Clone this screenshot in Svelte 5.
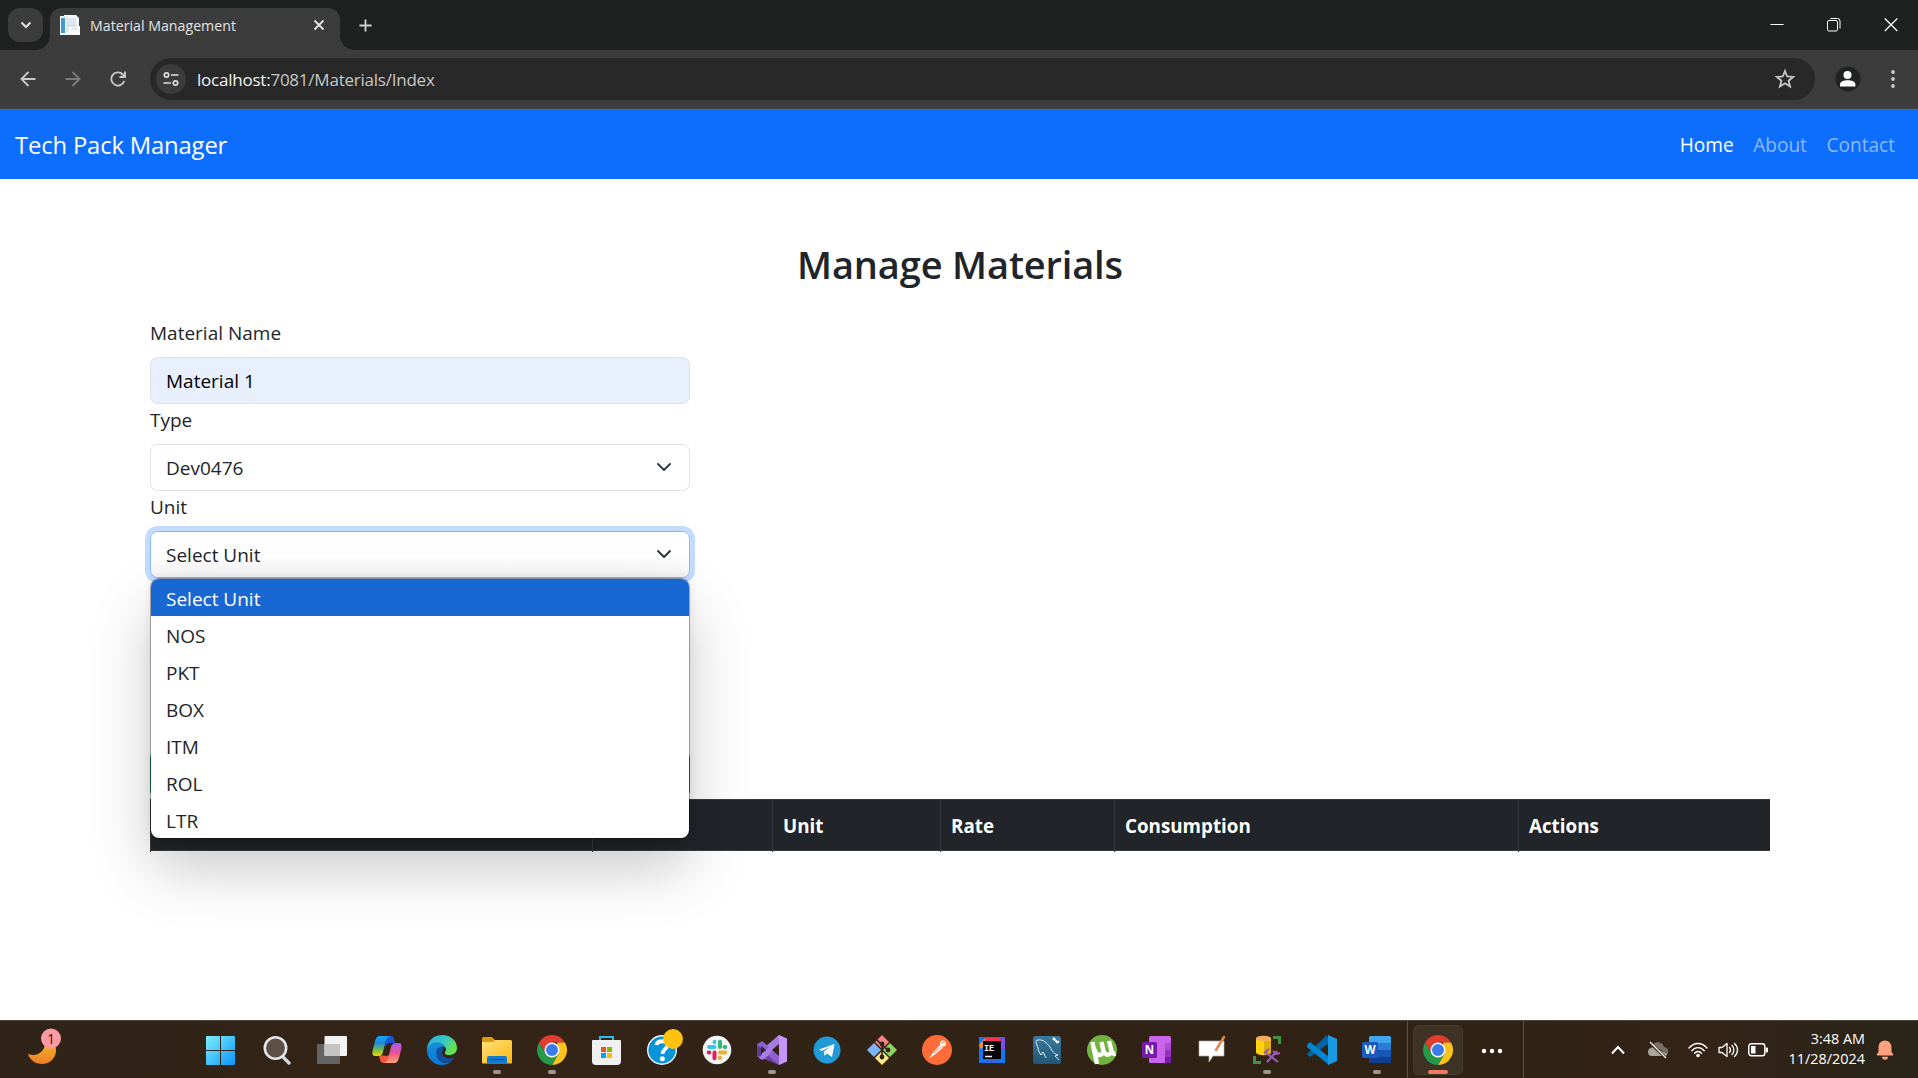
<script>
  const links = ['Home', 'About', 'Contact'];
  const units = ['Select Unit', 'NOS', 'PKT', 'BOX', 'ITM', 'ROL', 'LTR'];
  const columns = ['', '', 'Unit', 'Rate', 'Consumption', 'Actions'];
  const apps = [
    { icon: start }, { icon: search }, { icon: taskview }, { icon: copilot }, { icon: edge },
    { icon: explorer, open: true }, { icon: chrome, open: true }, { icon: store }, { icon: help },
    { icon: slack }, { icon: visualstudio, open: true }, { icon: telegram }, { icon: git },
    { icon: postman }, { icon: intellij }, { icon: mysql }, { icon: utorrent }, { icon: onenote },
    { icon: whiteboard }, { icon: ssms, open: true }, { icon: vscode }, { icon: word, open: true }
  ];
</script>

{#snippet start()}
  <svg viewBox="0 0 30 30">
    <defs><linearGradient id="win" x1="0" y1="0" x2="1" y2="1" gradientUnits="objectBoundingBox"><stop offset="0" stop-color="#7df1ff" /><stop offset="1" stop-color="#0a95fb" /></linearGradient></defs>
    <path fill="url(#win)" d="M1 2a1 1 0 0 1 1-1h13v14H1zM16 1h13a1 1 0 0 1 1 1v13H16zM1 16h14v14H2a1 1 0 0 1-1-1zM16 16h14v13a1 1 0 0 1-1 1H16z" />
  </svg>
{/snippet}
{#snippet search()}
  <svg viewBox="0 0 30 30"><path d="m21 22 6 6" stroke="#d5d8dc" stroke-width="3.4" stroke-linecap="round" /><circle cx="13.5" cy="13" r="10.7" fill="#5c4f43" stroke="#e4e6e9" stroke-width="2.6" /></svg>
{/snippet}
{#snippet taskview()}
  <svg viewBox="0 0 30 30"><rect y="9" width="23" height="20" rx="1" fill="#646464" /><rect x="7.5" y="1" width="22.5" height="20" rx="1" fill="#f2f2f2" /><path fill="#c4c4c4" d="M7.500 9H23v12H8.500a1 1 0 0 1-1-1z" /></svg>
{/snippet}
{#snippet copilot()}
  <svg viewBox="0 0 30 30">
    <defs>
      <linearGradient id="cp1" x1="0" y1="0" x2="0" y2="1"><stop offset="0" stop-color="#15a5f5" /><stop offset=".35" stop-color="#1f86dd" /><stop offset=".65" stop-color="#62b959" /><stop offset="1" stop-color="#f8d400" /></linearGradient>
      <linearGradient id="cp2" x1="0" y1="0" x2="0" y2="1"><stop offset="0" stop-color="#a35cf2" /><stop offset=".5" stop-color="#ee4f93" /><stop offset="1" stop-color="#ffa767" /></linearGradient>
    </defs>
    <path fill="#1c56d7" d="M14 1h5c3 0 3 3 4 7h-5c-3 0-4 2-5 6z" />
    <path fill="#f2573c" d="M7 20c1 5 1 8 5 8h4l3-9-4 2z" />
    <path fill="url(#cp1)" d="M8 1h10c-3 1-4 4-5 8l-2 8c-1 3-2 4-5 4H3c-3 0-3-3-2-7l2-8c1-3 2-5 5-5z" />
    <path fill="url(#cp2)" d="M22 28H12c3-1 4-4 5-8l2-8c1-3 2-4 5-4h3c3 0 3 3 2 7l-2 8c-1 3-2 5-5 5z" />
  </svg>
{/snippet}
{#snippet edge()}
  <svg viewBox="0 0 30 30">
    <defs>
      <linearGradient id="ed1" x1="0" y1="0" x2="1" y2=".5"><stop offset="0" stop-color="#2aa8e4" /><stop offset=".55" stop-color="#35c7c8" /><stop offset="1" stop-color="#69e34b" /></linearGradient>
      <linearGradient id="ed2" x1="0" y1="0" x2="0" y2="1"><stop offset="0" stop-color="#168fd6" /><stop offset="1" stop-color="#0878d8" /></linearGradient>
    </defs>
    <path fill="url(#ed2)" d="M0 15C0 9 6 6 11 7c6 0 9 4 9 8-2-5-8-4-9 1-1 7 6 13 13 11-3 2-6 3-9 3C6 30 0 23 0 15z" />
    <path fill="#104f9c" d="M10 14c-2 4 0 12 6 14 4 1 9-1 12-6-5 3-13 1-13-5 0-2 1-3 2-4-3-1-6-1-7 1z" />
    <path fill="url(#ed1)" d="M0 14C1 5 7 0 15 0c9 0 15 6 15 13 0 5-4 7-8 7-3 0-5-1-4-3 2-2 1-5-1-7C12 5 3 7 0 14z" />
  </svg>
{/snippet}
{#snippet explorer()}
  <svg viewBox="0 0 30 30">
    <defs><linearGradient id="fld" x1="0" y1="0" x2="1" y2="1"><stop offset="0" stop-color="#ffe07a" /><stop offset="1" stop-color="#fcb813" /></linearGradient></defs>
    <path fill="#dd9c0c" d="M0 3.500a1.500 1.500 0 0 1 1.500-1.500H10l3 3v5H0z" /><path fill="url(#fld)" d="M0 7h11l2-2h15.500A1.500 1.500 0 0 1 30 6.500v21a1 1 0 0 1-1 1H1a1 1 0 0 1-1-1z" />
    <path fill="#1479cf" d="M5 28.500V23a2 2 0 0 1 2-2h16a2 2 0 0 1 2 2v5.500z" /><path stroke="#0b4d92" d="M8 24.500h14" />
  </svg>
{/snippet}
{#snippet chrome()}
  <svg viewBox="0 0 30 30">
    <path fill="#e33b2e" d="M2.010 7.500A15 15 0 0 1 28 7.500H15L8.500 18.750z" />
    <path fill="#fcc21b" d="M28 7.500A15 15 0 0 1 15 30l6.500-11.250L20 7.500z" />
    <path fill="#259b4a" d="M15 30A15 15 0 0 1 2.010 7.500L8.500 18.750 21.500 18.750z" />
    <circle cx="15" cy="15" r="7.500" fill="#fff" /><circle cx="15" cy="15" r="6" fill="#3a7cec" />
  </svg>
{/snippet}
{#snippet store()}
  <svg viewBox="0 0 30 30"><path d="M8 7V2h13v5" fill="none" stroke="#2cbbed" stroke-width="2" /><path fill="#f0f0f0" d="M0 6a1 1 0 0 1 1-1h27a1 1 0 0 1 1 1v20a4 4 0 0 1-4 4H4a4 4 0 0 1-4-4z" /><path fill="#f25022" d="M9 12h5v5H9z" /><path fill="#7fba00" d="M15 12h5v5h-5z" /><path fill="#00a4ef" d="M9 18h5v5H9z" /><path fill="#ffb900" d="M15 18h5v5h-5z" /></svg>
{/snippet}
{#snippet help()}
  <svg viewBox="0 0 30 30"><circle cx="15" cy="15" r="14.300" fill="#0795d8" stroke="#eef8fc" stroke-width="1.400" /><path d="M9.500 10c1-5 11-5 11 0 0 4-5 4-5 9" fill="none" stroke="#fff" stroke-width="3.800" /><circle cx="15.300" cy="23.800" r="2.500" fill="#fff" /><circle cx="26" cy="4" r="10" fill="#ffc20e" /></svg>
{/snippet}
{#snippet slack()}
  <svg viewBox="0 0 30 30">
    <circle cx="15" cy="15" r="14.300" fill="#f6f5f6" />
    <g fill="none" stroke-width="4" stroke-linecap="round">
      <path stroke="#36c5f0" d="M7 12h5.500M12.500 6.700v.6" /><path stroke="#2eb67d" d="M18 6.700V12M23.200 12h-.6" />
      <path stroke="#ecb22e" d="M18 17.500h5.200M18 23.200v-.6" /><path stroke="#e01e5a" d="M12.500 17.500v5.700M6.700 17.500h.6" />
    </g>
  </svg>
{/snippet}
{#snippet visualstudio()}
  <svg viewBox="0 0 30 30"><path fill="#6a43a0" d="M0 9 3 7.500 22 25v5L2 22 0 21z" /><path fill="#aa7ee4" d="m22 0-17 14.500L0 21l4 3 4-.5L22 9z" /><path fill="#8f5fd2" d="m0 10 5-4 17 14v10L5 15v7L0 21z" /><path fill="#5d3a92" d="m0 10 5 4v8l-5-1z" /><path fill="#a97be5" d="m2 23 20-23v9L8 23.500 5 25z" /><path fill="#c695f8" d="m22 0 8 3.500v23L22 30z" /><path fill="#332315" d="m22 9-7 6 7 6zM4 11l5 4-5 4z" /></svg>
{/snippet}
{#snippet telegram()}
  <svg viewBox="0 0 30 30"><circle cx="15" cy="15" r="13.500" fill="#209bd8" /><path fill="#fff" d="M7 14.500 22.500 9 20 22l-5-3.500-2.500 2.300-.8-4.300 7-5-9 4.400z" /></svg>
{/snippet}
{#snippet git()}
  <svg viewBox="0 0 30 30"><path fill="#f58080" d="m15 0 7 7-7 7-7-7z" /><path fill="#80b3ff" d="m7 8 7 7-7 7-7-7z" /><path fill="#8dd35f" d="m23 8 7 7-7 7-7-7z" /><path fill="#ffe680" d="m15 16 7 7-7 7-7-7z" /><path d="m9 4 6 6v12m0-12 6 5" fill="none" stroke="#302217" stroke-width="1.600" /><g fill="#302217"><circle cx="15" cy="9" r="2.400" /><circle cx="21" cy="15" r="2.400" /><circle cx="15" cy="22" r="2.400" /></g></svg>
{/snippet}
{#snippet postman()}
  <svg viewBox="0 0 30 30"><circle cx="15" cy="15" r="15" fill="#ff6c37" /><circle cx="21" cy="8.500" r="3" fill="#fff" /><path fill="#fff" d="m18 10 3 2.500-8 7-6 4 4-6z" /><path stroke="#ff6c37" stroke-width=".8" d="m12 18 7-6M19 8l4-1" /></svg>
{/snippet}
{#snippet intellij()}
  <svg viewBox="0 0 30 30">
    <defs><linearGradient id="ij" x1="0" y1="0" x2="1" y2="0"><stop offset="0" stop-color="#087cfa" /><stop offset=".5" stop-color="#3c60dd" /><stop offset="1" stop-color="#087cfa" /></linearGradient></defs>
    <path fill="url(#ij)" d="M2 2h26v26H2z" /><path fill="#fe315d" d="M8 3h15l4 10H5z" /><path fill="#ff8a2b" d="M2 10 8 3v7l-4 4z" /><path fill="#7c4de8" d="M25 3h3v12h-3z" /><path fill="#07040a" d="M6 6h18v18H6z" /><path stroke="#fff" stroke-width="1.500" d="M8 21.500h7" /><text x="7" y="15.500" class="ij">IE</text>
  </svg>
{/snippet}
{#snippet mysql()}
  <svg viewBox="0 0 30 30">
    <defs><linearGradient id="my" x1="0" y1="0" x2="0" y2="1"><stop offset="0" stop-color="#3a7ba0" /><stop offset="1" stop-color="#235675" /></linearGradient></defs>
    <rect x="1" y="1" width="28" height="28" rx="2.500" fill="url(#my)" /><path fill="none" stroke="#e5eef3" stroke-width="1" d="M9 20c-2-3-3-5-3-7C5 9 2 5 6 5c5-1 9 3 12 7 3 5 3 6 8 8l-3 1 4 4M9 20l2-3 3 6" /><path stroke="#fff" stroke-width="2" d="m21 3 5 5" /><path stroke="#fff" stroke-width="1.300" d="m21 5 2-2m2 5 2-2" />
  </svg>
{/snippet}
{#snippet utorrent()}
  <svg viewBox="0 0 30 30"><circle cx="15" cy="15" r="15" fill="#72b340" /><path fill="none" stroke="#fff" stroke-width="4.400" d="M5.500 7c1 7 3 13 4.500 22M7.500 14c2 9 10 7 8.500 0l-1.500-7m1.500 7c1 6 5 7 8 4M22 6l2.500 10c.5 2 2 3 4 2.500" /></svg>
{/snippet}
{#snippet onenote()}
  <svg viewBox="0 0 30 30"><rect x="7" y="1" width="22" height="27" rx="1.500" fill="#ca64ea" /><path fill="#ae4bd5" d="M23 8h6v7h-6z" /><path fill="#9332bf" d="M23 15h6v7h-6z" /><path fill="#7719aa" d="M23 22h6v5a1 1 0 0 1-1 1h-5z" /><rect y="7" width="15" height="16" rx="1.500" fill="#7719aa" /><text x="7.500" y="19" class="tile">N</text></svg>
{/snippet}
{#snippet whiteboard()}
  <svg viewBox="0 0 30 30"><path fill="#fff" d="M2 6h25v15H16l-4 6v-6H2z" stroke="#aaa" stroke-width=".7" /><path stroke="#df8752" stroke-width="2.500" stroke-linecap="round" d="m19 15 8-13" /></svg>
{/snippet}
{#snippet ssms()}
  <svg viewBox="0 0 30 30"><path fill="#ffd20b" d="M4 3h15v15c-3 3-12 3-15 0z" /><path fill="#dcaf0b" d="M12 6h7v12l-7 2z" /><ellipse cx="11.500" cy="3.500" rx="7.500" ry="2.700" fill="#f6ad59" /><path fill="none" stroke="#429341" stroke-width="3" d="M21 2.500h6.500V9M2.500 21v6.500H9" /><path fill="none" stroke="#9b59b6" stroke-width="2.200" d="m13 17 13 10M15 27l10-11m-13 2 5-4m4 2 3 3 4-1" /></svg>
{/snippet}
{#snippet vscode()}
  <svg viewBox="0 0 30 30"><path fill="#0065a9" d="m0 19 20-19 2 8L3 22z" /><path fill="#0085d1" d="m0 10 3-3 19 15v8L0 12z" /><path fill="#199ae0" d="M21 0 30 4v22l-9 4z" /></svg>
{/snippet}
{#snippet word()}
  <svg viewBox="0 0 30 30"><rect x="7" y="1" width="22" height="27" rx="1.500" fill="#1756b5" /><path fill="#41a5ee" d="M7 2.500A1.500 1.500 0 0 1 8.500 1h19A1.500 1.500 0 0 1 29 2.500V8H7z" /><path fill="#2b7cd3" d="M7 8h22v7H7z" /><path fill="#103f91" d="M7 22h22v4.500a1.500 1.500 0 0 1-1.500 1.500h-19A1.500 1.500 0 0 1 7 26.500z" /><rect y="7" width="16" height="16" rx="1.500" fill="#185abd" /><text x="8" y="19" class="tile">W</text></svg>
{/snippet}
{#snippet caret()}
  <svg class="caret" viewBox="0 0 16 16"><path fill="none" stroke="#343a40" stroke-linecap="round" stroke-linejoin="round" stroke-width="2" d="m2 5 6 6 6-6" /></svg>
{/snippet}

<div class="screen">
  <div class="tabstrip">
    <div class="tabsearch"><svg viewBox="0 0 12 12"><path d="m1.500 3.500 4.500 4.500 4.500-4.500" fill="none" stroke="#e3e3e3" stroke-width="2" /></svg></div>
    <div class="tab">
      <svg class="favicon" viewBox="0 0 20 20"><path fill="#f4f7fa" d="M0 1h4V0h12l3 3v8h1v9H0z" /><path fill="#4299cc" d="M1 3h4v15H1z" /><path fill="#dfe5ef" d="M6 3h10v14H6z" /><path fill="#fff" d="M9 11h10v8H9z" /><path stroke="#c7ced8" d="M8 11h9M11 14h6" /></svg>
      <span>Material Management</span>
      <svg class="x" viewBox="0 0 12 12"><path d="m1.500 1.500 9 9m0-9-9 9" stroke="#e3e3e3" stroke-width="1.800" /></svg>
    </div>
    <svg class="plus" viewBox="0 0 14 14"><path d="M7 .5v13M.5 7h13" stroke="#d0d0d0" stroke-width="2" /></svg>
    <div class="winbtns">
      <svg viewBox="0 0 14 14"><path d="M.5 6.500h13" stroke="#fff" /></svg>
      <svg viewBox="0 0 14 14"><rect x=".5" y="2.500" width="10" height="10.500" rx="1.500" fill="none" stroke="#fff" /><path d="M3 .5h7.500A2.500 2.500 0 0 1 13 3v7.500" fill="none" stroke="#fff" /></svg>
      <svg viewBox="0 0 14 14"><path d="m.8.500 12.500 12.500m0-12.500L.8 13" stroke="#fff" stroke-width="1.200" /></svg>
    </div>
  </div>

  <div class="toolbar">
    <svg class="nav" viewBox="0 0 16 16"><path d="M15.500 8H2m6.500-7L1.500 8l7 7" fill="none" stroke="#c8c8c8" stroke-width="1.900" /></svg>
    <svg class="nav" viewBox="0 0 16 16"><path d="M.5 8H14M7.500 1l7 7-7 7" fill="none" stroke="#7b7b7b" stroke-width="1.900" /></svg>
    <svg class="nav" viewBox="0 0 16 16"><path d="M14.200 10A6.600 6.600 0 1 1 12.800 3.500L14.500 5.500M15 .5V6H9.500" fill="none" stroke="#c8c8c8" stroke-width="1.900" /></svg>
    <div class="omnibox">
      <div class="site"><svg viewBox="0 0 16 16"><g fill="none" stroke="#dedede" stroke-width="1.700"><circle cx="3.500" cy="4" r="2.200" /><path d="M8 4h7.500M.5 12H8" /><circle cx="12.500" cy="12" r="2.200" /></g></svg></div>
      <p><b>localhost:</b>7081/Materials/Index</p>
      <svg class="star" viewBox="0 0 20 20"><path d="m10 2 2.200 5.500 6 .4-4.600 3.800 1.500 5.800L10 14.300l-5.100 3.200 1.500-5.800L1.800 7.900l6-.4z" fill="none" stroke="#c8c8c8" stroke-width="1.800" /></svg>
    </div>
    <svg class="avatar" viewBox="0 0 26 26"><circle cx="13" cy="13" r="12.500" fill="#202221" /><circle cx="12.500" cy="9" r="4" fill="#fff" /><path fill="#fff" d="M5 20.500v-2c0-3 4-4.200 7.700-4.200s7.700 1.200 7.700 4.200v2z" /></svg>
    <svg class="menu" viewBox="0 0 4 18"><g fill="#c8c8c8"><circle cx="2" cy="2" r="1.900" /><circle cx="2" cy="9" r="1.900" /><circle cx="2" cy="16" r="1.900" /></g></svg>
  </div>

  <header>
    <span class="brand">Tech Pack Manager</span>
    <nav>{#each links as link, i}<span class:current={i === 0}>{link}</span>{/each}</nav>
  </header>

  <main>
    <h1>Manage Materials</h1>
    <form>
      <div class="label">Material Name</div>
      <div class="field filled">Material 1</div>
      <div class="label">Type</div>
      <div class="field">Dev0476{@render caret()}</div>
      <div class="label">Unit</div>
      <div class="field focus">
        Select Unit{@render caret()}
        <ul>{#each units as unit, i}<li class:selected={i === 0}>{unit}</li>{/each}</ul>
      </div>
      <div class="submit"></div>
    </form>
    <div class="table">{#each columns as col}<div>{col}</div>{/each}</div>
  </main>

  <footer>
    <div class="weather">
      <svg viewBox="0 0 36 40"><defs><linearGradient id="moon" x1="0" y1="0" x2="0" y2="1"><stop offset="0" stop-color="#f6b52c" /><stop offset="1" stop-color="#ec7d25" /></linearGradient></defs><path fill="url(#moon)" d="M2 27c8 3 16-1 17-10 6-3 11 0 11 6 0 8-6 14-14 14C9 37 4 33 2 27z" /><circle cx="25" cy="11.500" r="10" fill="#ff99a4" /><text x="25" y="16.500">1</text></svg>
    </div>
    <div class="apps">{#each apps as app}<div class="app" class:open={app.open}>{@render app.icon()}</div>{/each}</div>
    <div class="running"><div class="app active">{@render chrome()}</div><svg class="more" viewBox="0 0 22 6"><g fill="#fff"><circle cx="3" cy="3" r="2.200" /><circle cx="11" cy="3" r="2.200" /><circle cx="19" cy="3" r="2.200" /></g></svg></div>
    <div class="tray">
      <svg class="up" viewBox="0 0 14 10"><path d="m1 8.500 6-6.500 6 6.500" fill="none" stroke="#fff" stroke-width="2" /></svg>
      <svg class="cloud" viewBox="0 0 22 18"><path fill="#776e67" d="M4 8C5 0 15-1 17 6c4 0 5 4 4 7l-9-5z" /><path fill="#aaa49f" d="M5 15a4 4 0 0 1 0-8c3-1 5 0 7 2l7 3c2 1 1 3-1 3z" /><path stroke="#322316" stroke-width="3" d="m2 1 17 16" /><path stroke="#fff" stroke-width="1.200" d="m3 1 16 16" /></svg>
      <svg class="wifi" viewBox="0 0 20 16"><g fill="none" stroke="#fff" stroke-width="1.400" stroke-linecap="round"><path d="M1 6c5-6 13-6 18 0M3.800 8.800c3.500-4.200 8.900-4.200 12.400 0M6.600 11.300c2-2.400 4.800-2.400 6.800 0" /></g><circle cx="10" cy="13.500" r="1.800" fill="#fff" /></svg>
      <svg class="volume" viewBox="0 0 21 16"><path d="M1 5.500h3L9 1.500v13l-5-4H1zM11.500 5.500c1.300 1.500 1.300 3.500 0 5M14 3.500c2.500 2.500 2.500 6.500 0 9M16.500 1.500c4 3.500 4 9.500 0 13" fill="none" stroke="#fff" stroke-width="1.300" stroke-linecap="round" stroke-linejoin="round" /></svg>
      <svg class="battery" viewBox="0 0 20 14"><rect x=".8" y=".8" width="16" height="12" rx="2.500" fill="none" stroke="#fff" stroke-width="1.400" /><path fill="#fff" d="M3 3h4.500v7.600H3zM17.500 4.500H19a1 1 0 0 1 1 1v3a1 1 0 0 1-1 1h-1.500z" /></svg>
      <div class="clock"><span>3:48 AM</span><span>11/28/2024</span></div>
      <svg class="bell" viewBox="0 0 18 20"><path fill="#fca27c" d="M9 .5c4 0 6.500 3 6.500 7v4.500l1.700 2.300c.3.600 0 1.200-.7 1.200h-15c-.7 0-1-.6-.7-1.200L2.500 12V7.500c0-4 2.500-7 6.500-7zM6 16.700h6a3 3 0 0 1-6 0z" /></svg>
    </div>
  </footer>
</div>

<style>
  :global(body) { margin: 0; overflow: hidden; }
  .screen { width: 1918px; height: 1078px; display: flex; flex-direction: column; overflow: hidden; background: #fff; color: #212529; font-family: "Open Sans", "Noto Sans", sans-serif; }
  svg { display: block; overflow: visible; flex: none; }

  .tabstrip { height: 50px; box-sizing: border-box; flex: none; display: flex; align-items: center; background: #1f2120; padding-left: 8px; }
  .tabsearch { width: 35px; height: 34px; border-radius: 12px; background: #3c3c3c; display: flex; align-items: center; justify-content: center; }
  .tabsearch svg { width: 12px; height: 12px; }
  .tab { position: relative; width: 290px; height: 42px; box-sizing: border-box; align-self: flex-end; margin-left: 7px; padding: 0 15px 8px 10px; display: flex; align-items: center; background: #3c3c3c; border-radius: 12px 12px 0 0; color: #e3e3e3; font-size: 14.200px; }
  .tab::before, .tab::after { content: ""; position: absolute; bottom: 0; width: 14px; height: 14px; }
  .tab::before { left: -14px; background: radial-gradient(circle at 0 0, transparent 13.500px, #3c3c3c 14px); }
  .tab::after { right: -14px; background: radial-gradient(circle at 100% 0, transparent 13.500px, #3c3c3c 14px); }
  .favicon { width: 20px; height: 20px; margin-right: 10px; }
  .tab span { flex: 1; white-space: nowrap; }
  .x { width: 12px; height: 12px; margin-bottom: 1px; }
  .plus { width: 13px; height: 13px; margin-left: 19px; }
  .winbtns { margin-left: auto; margin-right: 20px; display: flex; gap: 43px; }
  .winbtns svg { width: 14px; height: 14px; }

  .toolbar { height: 59px; box-sizing: border-box; flex: none; display: flex; align-items: center; background: #3c3c3c; border-bottom: 1px solid #474747; padding-left: 20px; }
  .nav { width: 16px; height: 16px; margin-right: 29px; }
  .nav:nth-child(3) { margin-right: 24px; }
  .omnibox { width: 1665px; height: 42px; box-sizing: border-box; border-radius: 21px; background: #282828; display: flex; align-items: center; padding: 0 20px 0 6px; color: #c7c7c7; font-size: 17px; letter-spacing: -.23px; }
  .site { width: 30px; height: 30px; border-radius: 50%; background: #3c3c3c; display: flex; align-items: center; justify-content: center; }
  .site svg { width: 16px; height: 16px; }
  .omnibox p { flex: 1; margin: 0 0 0 11px; }
  .omnibox b { font-weight: 400; color: #f1f1f1; }
  .star { width: 20px; height: 20px; }
  .avatar { width: 26px; height: 26px; margin-left: 20px; }
  .menu { width: 4px; height: 18px; margin-left: 30px; }

  header { height: 70px; box-sizing: border-box; flex: none; display: flex; align-items: center; justify-content: space-between; background: #0d6efd; padding: 2px 23px 0 15px; }
  .brand { color: #fff; font-size: 23.800px; letter-spacing: -.15px; }
  nav { display: flex; gap: 19.500px; font-size: 19.100px; color: #8abaff; }
  .current { color: #fff; }

  main { flex: 1; padding: 60px 148px 0 150px; }
  h1 { margin: 0 0 30px; height: 48px; line-height: 50px; text-align: center; font-size: 38px; font-weight: 600; letter-spacing: -.15px; }
  form { width: 540px; height: 482px; font-size: 19px; }
  .label { height: 30px; line-height: 33px; margin-bottom: 10px; }
  .field { position: relative; z-index: 1; height: 47px; box-sizing: border-box; border: 1px solid #dee2e6; border-radius: 7.500px; padding: 2px 15px 0; line-height: 45px; display: flex; align-items: center; justify-content: space-between; background: #fff; }
  .filled { background: #e8f0fe; color: #000; }
  .caret { width: 16px; height: 16px; margin: 0 2px 3px; }
  .focus { border-color: #86b7fe; box-shadow: 0 0 0 5px #c2dbfe; background: linear-gradient(#fff 55%, #f4f4f4); }
  ul { position: absolute; top: 47px; left: 0; width: 538px; margin: 0; padding: 0; list-style: none; overflow: hidden; border-radius: 8px; background: #fff; box-shadow: 0 0 0 1px rgba(0, 0, 0, .3), 0 30px 60px rgba(0, 0, 0, .22), 0 0 10px rgba(0, 0, 0, .1); }
  li { height: 37px; line-height: 41px; padding-left: 15px; }
  .selected { background: #1967d2; color: #fff; }
  .submit { margin-top: 173px; height: 47px; border-radius: 7.500px; background: #198754; }
  .table { display: grid; grid-template-columns: 442px 180px 168px 174px 404px 252px; height: 52px; box-sizing: border-box; background: #212529; border: solid #373b3e; border-width: 1px 0; color: #fff; font-size: 18.800px; font-weight: 700; line-height: 52px; }
  .table div { padding-left: 10px; border-left: 1px solid #373b3e; }

  footer { height: 58px; box-sizing: border-box; flex: none; display: flex; background: linear-gradient(90deg, #302317, #352318 25%, #302315 50%, #302315 80%, #352317 88%, #292519); border-top: 1px solid #4d453b; }
  .weather { width: 192px; padding: 6px 0 0 26px; box-sizing: border-box; }
  .weather svg { width: 36px; height: 40px; }
  .weather text { font-size: 14px; text-anchor: middle; fill: #2c1a18; }
  .apps { display: flex; width: 1215px; }
  .app { position: relative; width: 55px; flex: none; display: flex; justify-content: center; padding-top: 14px; box-sizing: border-box; }
  .app:first-child { margin-right: 2px; }
  .app svg { width: 30px; height: 30px; }
  .open::after, .active::after { content: ""; position: absolute; bottom: 4px; width: 8px; height: 4px; border-radius: 2px; background: #9e9791; }
  .ij { font: 700 8.500px "Liberation Mono", monospace; fill: #fff; }
  .tile { font-size: 11.500px; font-weight: 700; fill: #fff; text-anchor: middle; }
  .running { width: 117px; box-sizing: border-box; border: solid #5a5045; border-width: 0 1px; display: flex; align-items: center; }
  .running .active { width: 50px; height: 50px; margin: 0 0 0 5px; padding-top: 9px; border: 1px solid #463c31; border-radius: 6px; background: #3e3225; }
  .active::after { width: 20px; bottom: 0; background: #ef7b5d; }
  .more { width: 22px; height: 6px; margin: 3px 0 0 18px; }
  .tray { flex: 1; display: flex; align-items: center; color: #fff; padding: 1px 0 0 87px; }
  .up { width: 14px; height: 10px; }
  .cloud { width: 22px; height: 18px; margin-left: 22px; }
  .wifi { width: 20px; height: 16px; margin-left: 19px; }
  .volume { width: 21px; height: 16px; margin-left: 10px; }
  .battery { width: 20px; height: 14px; margin-left: 9px; }
  .clock { width: 98px; display: flex; flex-direction: column; align-items: flex-end; font-size: 14.400px; line-height: 20px; margin: -2px 0 0 -1px; }
  .bell { width: 18px; height: 20px; margin-left: 11px; }
</style>
